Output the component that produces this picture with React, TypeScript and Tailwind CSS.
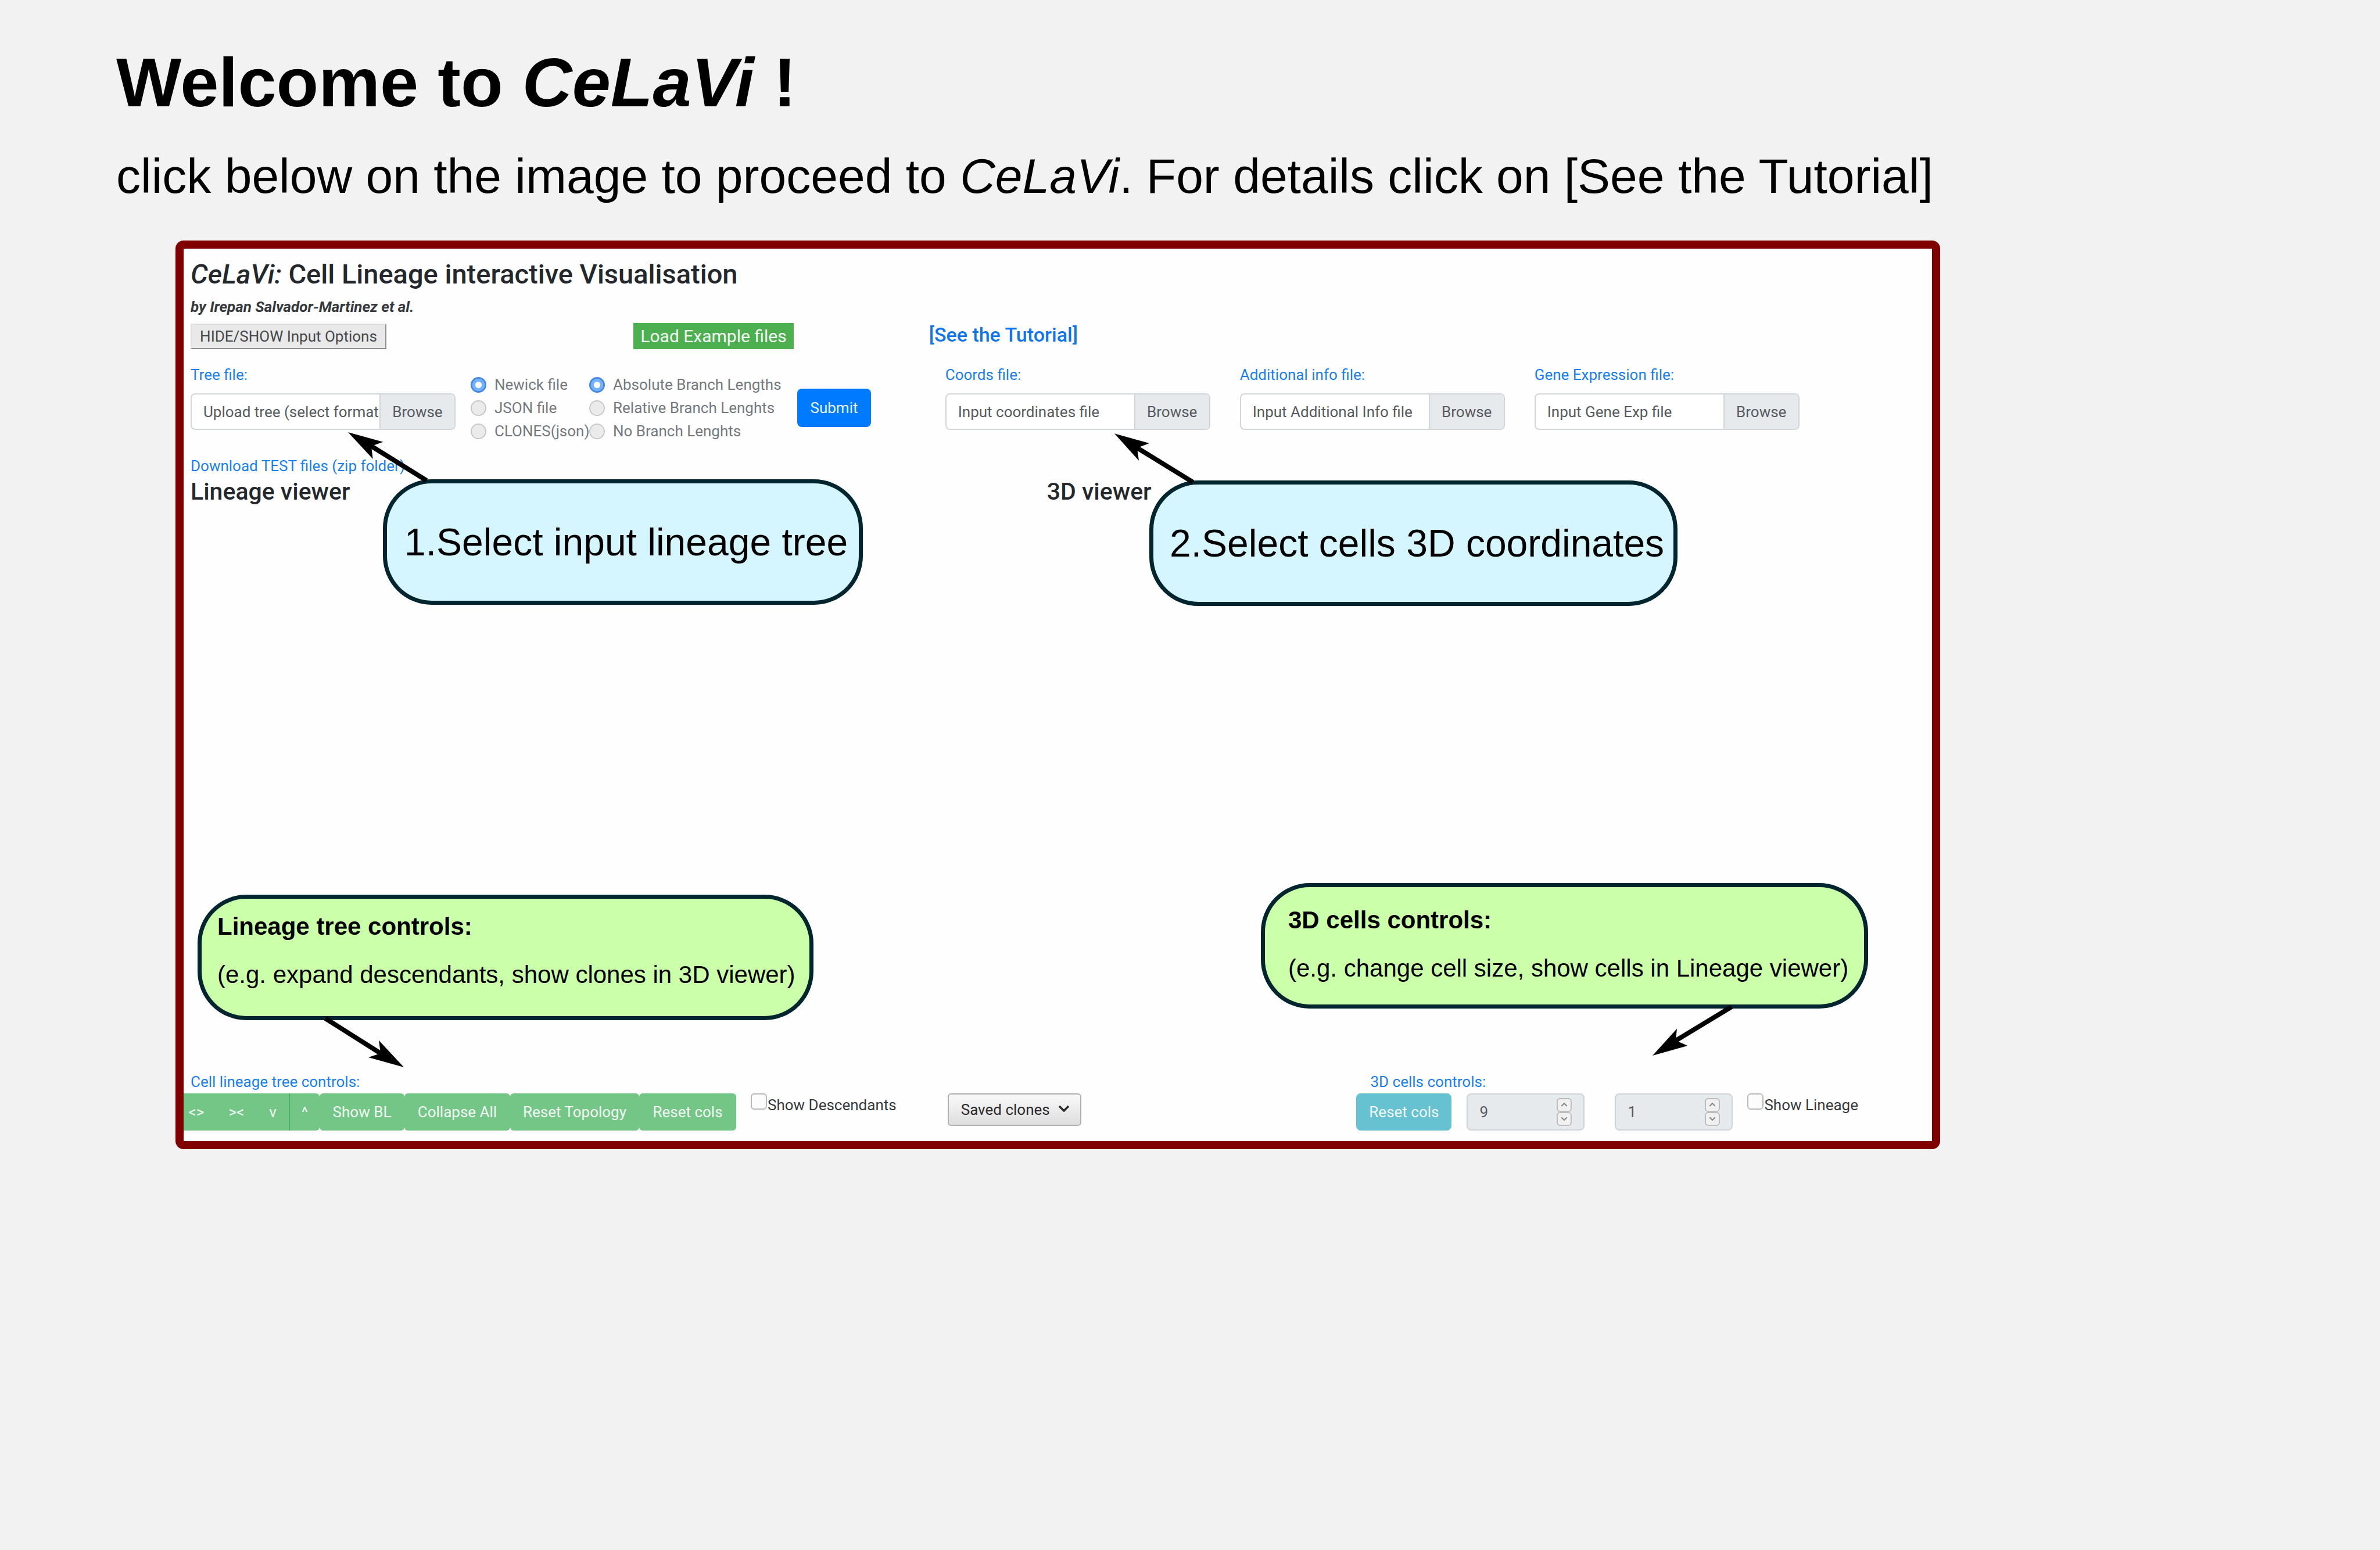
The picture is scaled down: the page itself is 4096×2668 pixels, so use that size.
import React, { useId } from 'react';

const link = 'text-[#1a7ff0] text-[26px] leading-[32px]';

function FilePicker({ label, placeholder }: { label: string; placeholder: string }) {
  const id = useId();
  return (
    <div className="w-[456px] shrink-0">
      <label htmlFor={id} className="mb-4 block text-[26px] leading-[32px] text-[#1a7ff0]">
        {label}
      </label>
      <label className="flex h-[63px] cursor-pointer overflow-hidden rounded-lg border-2 border-[#d3d6d9] bg-white text-[26px] leading-[32px] text-[#565b60]">
        <input id={id} type="file" className="sr-only" />
        <span className="flex min-w-0 flex-1 items-center overflow-hidden whitespace-nowrap pl-[20px]">
          {placeholder}
        </span>
        <span className="flex w-[129px] shrink-0 items-center justify-center border-l-2 border-[#d3d6d9] bg-[#e7eaed]">
          Browse
        </span>
      </label>
    </div>
  );
}

function RadioGroup({ name, options, legend }: { name: string; options: string[]; legend: string }) {
  return (
    <div role="radiogroup" aria-label={legend}>
      {options.map((option, i) => (
        <label
          key={option}
          className="flex h-[40px] items-center gap-[14px] whitespace-nowrap text-[26px] leading-[32px] text-[#74797e]"
        >
          <input
            type="radio"
            name={name}
            defaultChecked={i === 0}
            className="size-[27px] shrink-0 appearance-none rounded-full border-2 border-[#c6c8ca] bg-[#ebebec] checked:border-[3px] checked:border-[#4488e6] checked:bg-white checked:shadow-[inset_0_0_0_5px_#72b2ff]"
          />
          {option}
        </label>
      ))}
    </div>
  );
}

function CheckBox({ label }: { label: string }) {
  return (
    <label className="flex items-start gap-px whitespace-nowrap text-[26px] leading-[32px] text-[#35393d]">
      <input
        type="checkbox"
        className="size-[28px] shrink-0 appearance-none rounded-md border-2 border-[#b9b9b9] bg-[#fcfcfc]"
      />
      <span className="pt-1">{label}</span>
    </label>
  );
}

function Chevron({ up = false, className }: { up?: boolean; className: string }) {
  return (
    <svg viewBox="0 0 20 12" className={className} fill="none" stroke="currentColor" strokeWidth="3.5" aria-hidden="true">
      <path d={up ? 'M2 10 L10 2 L18 10' : 'M2 2 L10 10 L18 2'} />
    </svg>
  );
}

function NumberBox({ label, value }: { label: string; value: number }) {
  return (
    <div className="flex h-[64px] w-[203px] items-center rounded-lg border-2 border-[#d0d4d8] bg-[#e7eaed] pl-[20px] pr-[20px]">
      <input
        type="number"
        aria-label={label}
        defaultValue={value}
        className="w-0 flex-1 appearance-none bg-transparent text-[26px] leading-[32px] text-[#565b60] [-moz-appearance:textfield] [&::-webkit-inner-spin-button]:appearance-none"
      />
      <div className="flex flex-col text-[#8a8a8a]">
        <button type="button" aria-label={`Increase ${label}`} className="flex h-[24px] w-[26px] items-center justify-center rounded-md border-2 border-[#bdbdbd] bg-[#f1f1f1]">
          <Chevron up className="w-[12px]" />
        </button>
        <button type="button" aria-label={`Decrease ${label}`} className="flex h-[24px] w-[26px] items-center justify-center rounded-md border-2 border-[#bdbdbd] bg-[#f1f1f1]">
          <Chevron className="w-[12px]" />
        </button>
      </div>
    </div>
  );
}

const green =
  'flex h-full items-center justify-center whitespace-nowrap bg-[#73c686] text-[26px] leading-[32px] text-[#f1fbf3]';

export default function App() {
  return (
    <main className="min-h-screen bg-[#f2f2f2] pt-[74px] font-['Liberation_Sans',sans-serif] text-black">
      <header className="pl-[200px]">
        <h1 className="text-[119px] font-bold leading-[136px]">
          Welcome to <em>CeLaVi</em> !
        </h1>
        <p className="mt-[45px] text-[84px] leading-[96px]">
          click below on the image to proceed to <em>CeLaVi</em>. For details click on [See the Tutorial]
        </p>
      </header>

      <section className="relative ml-[302px] mr-[757px] mt-[63px] rounded-[14px] bg-[#800000] p-[14px] font-['Roboto',sans-serif]">
        <div className="relative bg-[#fefefe] pb-[18px] pt-[14px]">
          <div className="pl-[12px]">
            <h2 className="text-[47px] font-medium leading-[60px] text-[#24282c]">
              <em>CeLaVi:</em> Cell Lineage interactive Visualisation
            </h2>
            <p className="mt-2 text-[26px] font-bold italic leading-[36px] text-[#35393d]">
              by Irepan Salvador-Martinez et al.
            </p>

            <div className="mt-[10px] grid grid-cols-[424fr_576fr] items-start">
              <div className="flex items-center gap-[425px]">
                <button type="button" className="h-[44px] w-[337px] whitespace-nowrap border-2 border-b-[#8f8f8f] border-l-[#dedede] border-r-[#8f8f8f] border-t-[#dedede] bg-[#e9e9e9] text-[26px] leading-[32px] text-[#45484b]">
                  HIDE/SHOW Input Options
                </button>
                <button type="button" className="h-[45px] w-[276px] whitespace-nowrap bg-[#4caf50] text-[30px] leading-[36px] text-[#f3fbf3]">
                  Load Example files
                </button>
              </div>
              <a href="#tutorial" className="text-[34px] font-medium leading-[40px] text-[#0f75ee]">
                [See the Tutorial]
              </a>
            </div>

            <div className="mt-7 grid grid-cols-[424fr_576fr]">
              <form className="flex items-start" onSubmit={(e: React.FormEvent) => e.preventDefault()}>
                <FilePicker label="Tree file:" placeholder="Upload tree (select format" />
                <div className="ml-[26px] mt-[13px] grid grid-cols-[204px_358px]">
                  <RadioGroup name="format" legend="File format" options={['Newick file', 'JSON file', 'CLONES(json)']} />
                  <RadioGroup
                    name="lengths"
                    legend="Branch lengths"
                    options={['Absolute Branch Lengths', 'Relative Branch Lenghts', 'No Branch Lenghts']}
                  />
                </div>
                <button type="submit" className="mt-[40px] h-[66px] w-[127px] shrink-0 rounded-lg bg-[#007bff] text-[26px] leading-[32px] text-[#e6f5ff]">
                  Submit
                </button>
              </form>
              <div className="flex gap-[51px] pl-[28px]">
                <FilePicker label="Coords file:" placeholder="Input coordinates file" />
                <FilePicker label="Additional info file:" placeholder="Input Additional Info file" />
                <FilePicker label="Gene Expression file:" placeholder="Input Gene Exp file" />
              </div>
            </div>

            <a href="#test-files" className={`mt-6 block w-fit ${link}`}>
              Download TEST files (zip folder)
            </a>
            <div className="mt-1 grid min-h-[1024px] grid-cols-[424fr_576fr] text-[41px] font-medium leading-[48px] text-[#24282c]">
              <h3>Lineage viewer</h3>
              <h3 className="pl-[203px]">3D viewer</h3>
            </div>
          </div>

          <div className="flex justify-between pr-[127px]">
            <div>
              <h4 className={`pl-[12px] ${link}`}>Cell lineage tree controls:</h4>
              <div className="mt-1 flex items-start">
                <div className="flex h-[64px]">
                  <button type="button" className={`${green} w-[56px] pr-[12px]`}>&lt;&gt;</button>
                  <button type="button" className={`${green} w-[70px]`}>&gt;&lt;</button>
                  <button type="button" className={`${green} w-[55px]`}>v</button>
                  <button type="button" className={`${green} w-[53px] rounded-r-md border-l-2 border-[#4fae66]`}>^</button>
                  <button type="button" className={`${green} w-[146px] rounded-md`}>Show BL</button>
                  <button type="button" className={`${green} w-[182px] rounded-md`}>Collapse All</button>
                  <button type="button" className={`${green} w-[222px] rounded-md`}>Reset Topology</button>
                  <button type="button" className={`${green} w-[167px] rounded-md`}>Reset cols</button>
                </div>
                <div className="ml-[25px]">
                  <CheckBox label="Show Descendants" />
                </div>
                <div className="relative ml-[88px] text-[#2a2a2a]">
                  <select
                    aria-label="Saved clones"
                    className="h-[56px] w-[230px] appearance-none rounded-md border-2 border-[#b0b0b0] bg-linear-to-b from-[#f9f9f9] to-[#dedede] pl-[21px] text-[26px] leading-[32px]"
                  >
                    <option>Saved clones</option>
                  </select>
                  <Chevron className="pointer-events-none absolute right-[20px] top-[20px] w-[20px]" />
                </div>
              </div>
            </div>

            <div>
              <h4 className={`pl-[24px] ${link}`}>3D cells controls:</h4>
              <div className="mt-1 flex items-start">
                <button type="button" className="h-[64px] w-[164px] rounded-lg bg-[#66c2d0] text-[26px] leading-[32px] text-[#effbfd]">
                  Reset cols
                </button>
                <div className="ml-[26px] flex gap-[52px]">
                  <NumberBox label="cell size" value={9} />
                  <NumberBox label="cell opacity" value={1} />
                </div>
                <div className="ml-[25px]">
                  <CheckBox label="Show Lineage" />
                </div>
              </div>
            </div>
          </div>

          {/* Annotation layer over the app preview */}
          <div className="absolute left-[343px] top-[397px] flex h-[216px] w-[826px] items-center whitespace-nowrap rounded-[84px] border-[7px] border-[#00252e] bg-[#d5f6ff] pl-[30px] font-['Liberation_Sans',sans-serif] text-[66px] leading-[72px]">
            1.Select input lineage tree
          </div>
          <svg viewBox="586 736 160 100" className="absolute left-[270px] top-[308px] h-[100px] w-[160px]" aria-hidden="true">
            <path d="M734 827 L636 766" stroke="#000" strokeWidth="8" />
            <path d="M599 744 L659.5 760.7 L639 768 L641.7 790 Z" />
          </svg>

          <div className="absolute left-[1662px] top-[399px] flex h-[216px] w-[909px] items-center whitespace-nowrap rounded-[84px] border-[7px] border-[#00252e] bg-[#d5f6ff] pl-[28px] font-['Liberation_Sans',sans-serif] text-[66px] leading-[72px]">
            2.Select cells 3D coordinates
          </div>
          <svg viewBox="1906 738 156 100" className="absolute left-[1590px] top-[310px] h-[100px] w-[156px]" aria-hidden="true">
            <path d="M2053 830 L1954 769" stroke="#000" strokeWidth="8" />
            <path d="M1918 746.3 L1978 763 L1957 771 L1960 793 Z" />
          </svg>

          <div className="absolute bottom-[208px] left-[24px] h-[216px] w-[1060px] whitespace-nowrap rounded-[84px] border-[7px] border-[#00252e] bg-[#ccffaa] pl-[27px] pt-[24px] font-['Liberation_Sans',sans-serif] text-[42px] leading-[48px]">
            <p className="font-bold">Lineage tree controls:</p>
            <p className="mt-[35px]">(e.g. expand descendants, show clones in 3D viewer)</p>
          </div>
          <svg viewBox="546 1746 160 100" className="absolute bottom-[119px] left-[230px] h-[100px] w-[160px]" aria-hidden="true">
            <path d="M560 1754 L658 1816" stroke="#000" strokeWidth="8" />
            <path d="M695 1838 L652 1791.8 L655 1814 L634 1821 Z" />
          </svg>

          <div className="absolute bottom-[228px] right-[110px] h-[216px] w-[1045px] whitespace-nowrap rounded-[84px] border-[7px] border-[#00252e] bg-[#ccffaa] pl-[40px] pt-[33px] font-['Liberation_Sans',sans-serif] text-[42px] leading-[48px]">
            <p className="font-bold">3D cells controls:</p>
            <p className="mt-[35px]">(e.g. change cell size, show cells in Lineage viewer)</p>
          </div>
          <svg viewBox="2836 1726 152 100" className="absolute bottom-[139px] right-[337px] h-[100px] w-[152px]" aria-hidden="true">
            <path d="M2980 1734 L2881 1794" stroke="#000" strokeWidth="8" />
            <path d="M2844 1818 L2886 1771.7 L2884 1792 L2904.5 1801 Z" />
          </svg>
        </div>
      </section>
    </main>
  );
}
